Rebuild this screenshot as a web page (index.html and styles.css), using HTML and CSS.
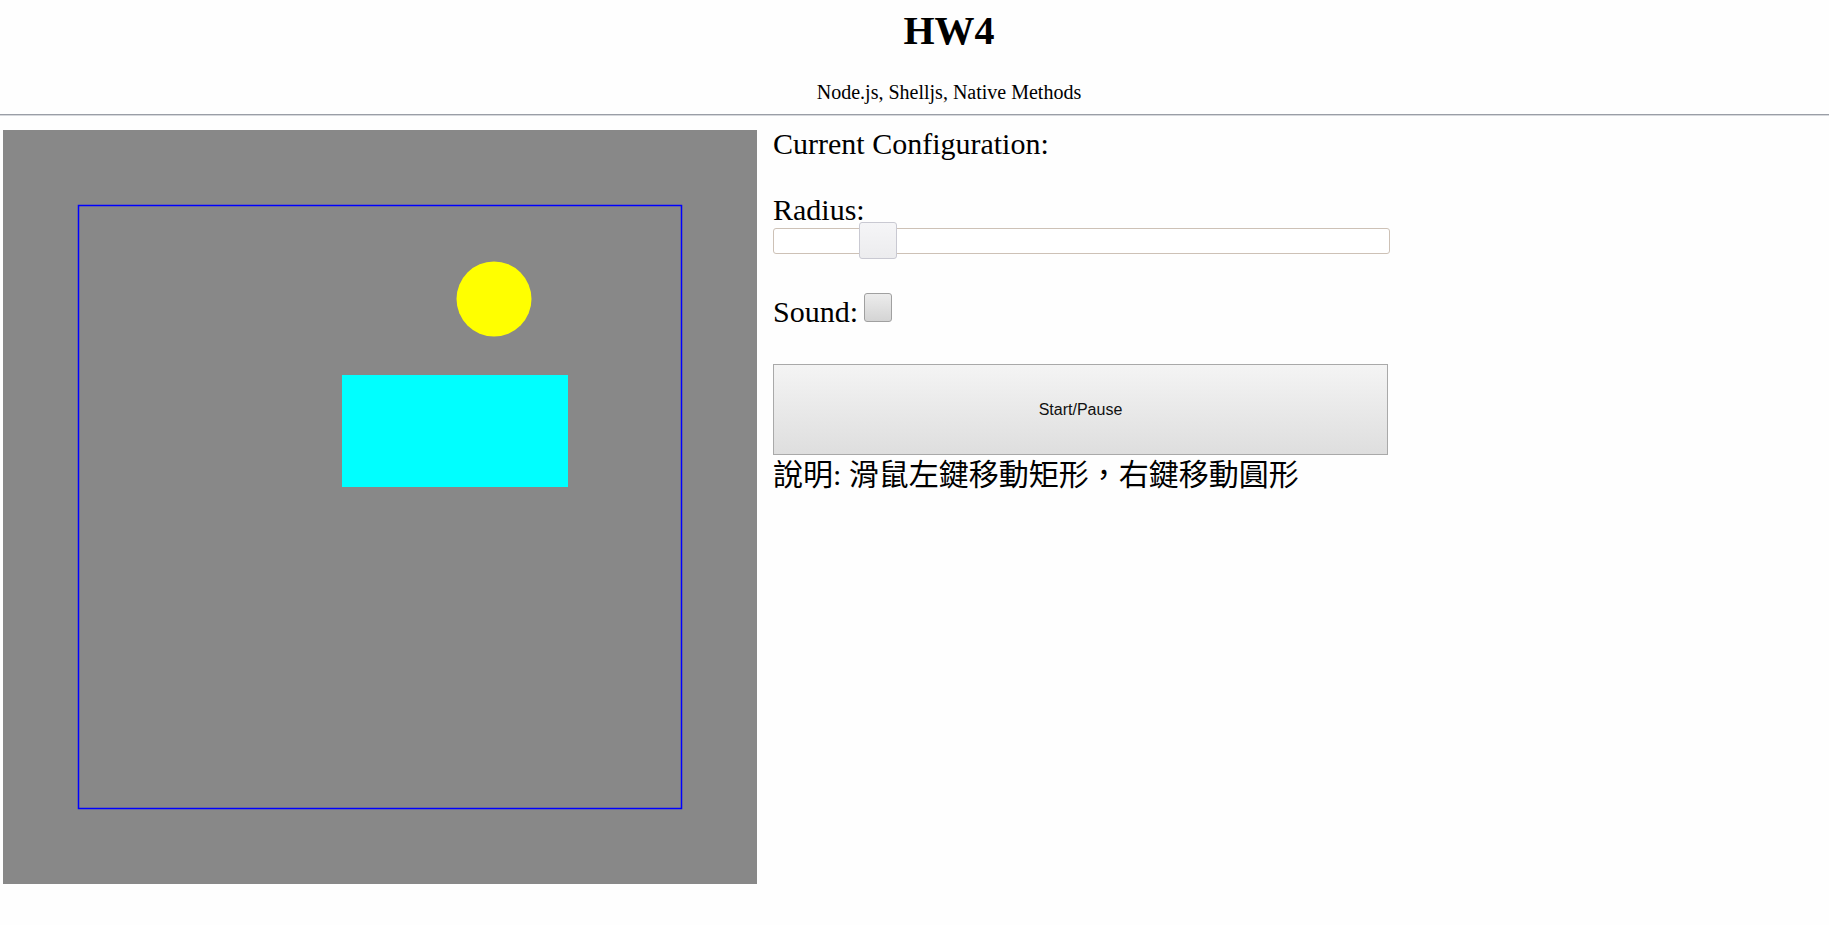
FILE: index.html
```html
<!DOCTYPE html>
<html lang="zh-Hant">
<head>
<meta charset="utf-8">
<title>HW4</title>
<link rel="stylesheet" href="styles.css">
</head>
<body>
<header class="page-header">
  <h1 class="title">HW4</h1>
  <p class="subtitle">Node.js, Shelljs, Native Methods</p>
</header>
<hr class="divider">
<main class="main">
  <div class="stage">
    <svg class="stage-svg" width="754" height="754" viewBox="0 0 754 754">
      <rect x="0" y="0" width="754" height="754" fill="#888888"/>
      <rect x="75.5" y="75.5" width="603" height="603" fill="none" stroke="#0000ff" stroke-width="1.5"/>
      <circle cx="491" cy="169" r="37.5" fill="#ffff00"/>
      <rect x="339" y="245" width="226" height="112" fill="#00ffff"/>
    </svg>
  </div>
  <section class="config">
    <div class="line">Current Configuration:</div>
    <div class="line radius-label">Radius:</div>
    <div class="slider" role="slider" aria-valuenow="15">
      <div class="slider-thumb"></div>
    </div>
    <div class="line sound-row">Sound:<span class="checkbox" role="checkbox" aria-checked="false"></span></div>
    <button class="start-btn" type="button">Start/Pause</button>
    <div class="line note">說明: 滑鼠左鍵移動矩形，右鍵移動圓形</div>
  </section>
</main>
</body>
</html>
```
FILE: styles.css
```css
html, body {
  margin: 0;
  padding: 0;
  background: #fefefe;
  color: #000;
  font-family: "Liberation Serif", "Times New Roman", serif;
}

.page-header {
  padding-left: 69px;
  text-align: center;
}

.title {
  margin: 8px 0 0;
  font-size: 40px;
  line-height: 46px;
  font-weight: bold;
}

.subtitle {
  margin: 27px 0 0;
  font-size: 20px;
  line-height: 23px;
}

.divider {
  margin: 10px 0 0;
  height: 0;
  border: 0;
  border-top: 1px solid #9a9ea6;
  border-bottom: 1px solid #d6d8dc;
}

.main {
  display: flex;
  align-items: flex-start;
  margin-top: 11px;
}

.stage {
  margin: 3px 0 0 3px;
  width: 754px;
  height: 754px;
}

.stage-svg {
  display: block;
}

.config {
  margin-left: 16px;
  display: flex;
  flex-direction: column;
  align-items: flex-start;
  font-size: 30px;
  line-height: 34px;
  font-family: "Liberation Serif", "Times New Roman", "Noto Sans CJK TC", serif;
}

.line {
  white-space: nowrap;
}

.radius-label {
  margin-top: 32px;
}

.slider {
  position: relative;
  box-sizing: border-box;
  width: 617px;
  height: 26px;
  border: 1px solid #cdc1b6;
  border-radius: 3px;
  background: #ffffff;
  margin-top: 1px;
}

.slider-thumb {
  position: absolute;
  left: 85px;
  top: -7px;
  box-sizing: border-box;
  width: 38px;
  height: 37px;
  border: 1px solid #c9c9d2;
  border-radius: 3px;
  background: linear-gradient(#f5f5f7, #ececee);
}

.sound-row {
  margin-top: 39px;
}

.checkbox {
  display: inline-block;
  box-sizing: border-box;
  width: 28px;
  height: 29px;
  margin-left: 6px;
  border: 1px solid #a0a0a0;
  border-radius: 3px;
  background: linear-gradient(#ececec, #d4d4d4);
  vertical-align: baseline;
}

.start-btn {
  margin-top: 35px;
  box-sizing: border-box;
  width: 615px;
  height: 91px;
  padding: 0;
  border: 1px solid #a9a9a9;
  border-radius: 0;
  background: linear-gradient(#f4f4f4, #dedede);
  font-family: "Liberation Sans", Arial, sans-serif;
  font-size: 16px;
  color: #111;
}

.note {
  margin-top: 3px;
}
```
